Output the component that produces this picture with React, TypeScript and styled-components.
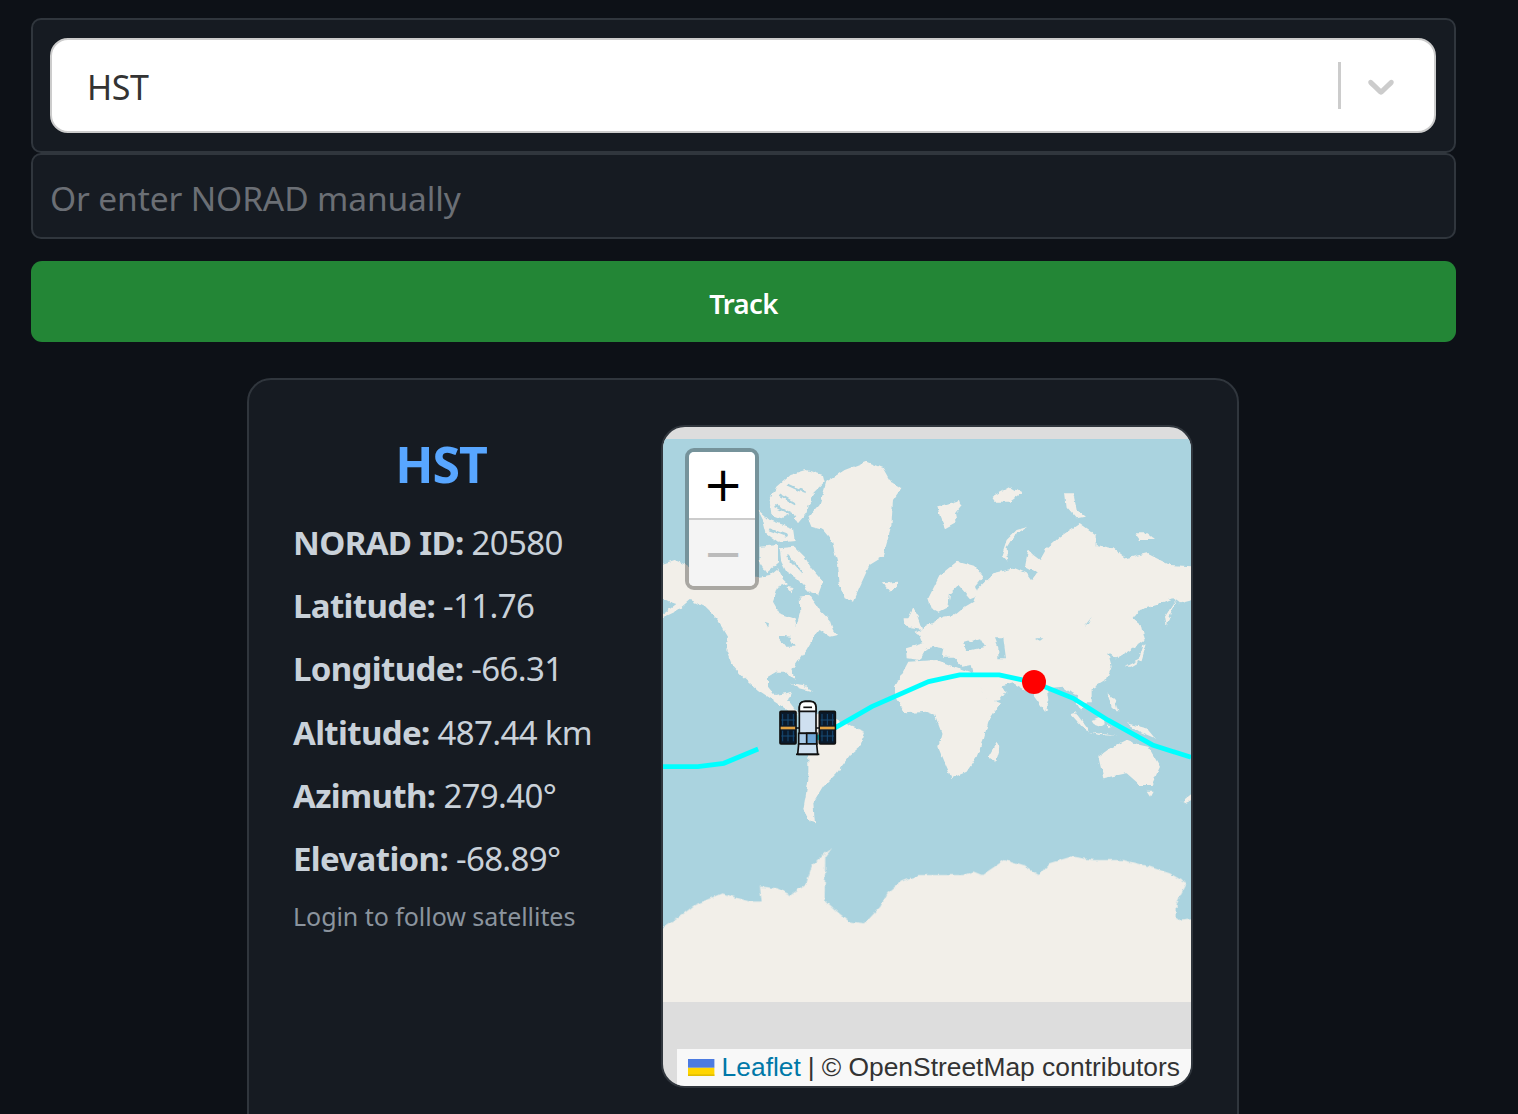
import React from "react";
import styled, { createGlobalStyle } from "styled-components";

const Global = createGlobalStyle`
  html, body { margin: 0; padding: 0; background: #0d1117; overflow: hidden; height: 1114px; }
  * { box-sizing: border-box; }
`;
const FONT = `"Noto Sans", "Open Sans", sans-serif`;

const Page = styled.div`
  width: 1425px;
  margin-left: 31px;
  padding-top: 18px;
  font-family: ${FONT};
  display: flex;
  flex-direction: column;
`;
const SelectPanel = styled.div`
  height: 135px;
  padding: 18px 18px 18px 17px;
  background: #161b22;
  border: 2px solid #30363d;
  border-radius: 10px;
`;
const SelectBox = styled.div`
  height: 95px;
  background: #fff;
  border: 2px solid #ccc;
  border-radius: 18px;
  display: flex;
  align-items: center;
  padding: 0 31px 0 35px;
`;
const SelectValue = styled.div`
  flex: 1;
  padding-top: 2px;
  font-size: 34px;
  letter-spacing: -0.4px;
  color: #333;
`;
const Separator = styled.span`
  width: 3px;
  height: 47px;
  background: #ccc;
`;
const Chevron = styled.svg`
  width: 44px;
  height: 44px;
  margin-left: 18px;
  fill: #ccc;
`;
const ManualInput = styled.input`
  height: 86px;
  width: 100%;
  padding: 3px 17px 0 17px;
  background: #161b22;
  border: 2px solid #30363d;
  border-radius: 10px;
  font-family: ${FONT};
  font-size: 33.5px;
  letter-spacing: -0.12px;
  outline: none;
  &::placeholder { color: #6b6f75; opacity: 1; }
`;
const TrackButton = styled.button`
  height: 81px;
  margin-top: 22px;
  padding-top: 4px;
  border: none;
  border-radius: 11px;
  background: #238636;
  color: #fff;
  font-family: ${FONT};
  font-size: 27.5px;
  font-weight: 600;
  letter-spacing: -0.6px;
`;
const Card = styled.section`
  width: 992px;
  height: 780px;
  margin: 36px 0 0 216px;
  padding: 45px 44px;
  background: #161b22;
  border: 2px solid #30363d;
  border-radius: 24px;
  display: flex;
  gap: 72px;
`;
const Info = styled.div`
  width: 296px;
  flex: none;
  display: flex;
  flex-direction: column;
`;
const Title = styled.h2`
  margin: 16px 0 24px;
  height: 46px;
  line-height: 46px;
  text-align: center;
  font-size: 50px;
  font-weight: 700;
  letter-spacing: -1px;
  color: #58a6ff;
`;
const Row = styled.div`
  height: 63.2px;
  line-height: 63.2px;
  font-size: 33px;
  letter-spacing: -0.65px;
  color: #c9d1d9;
  white-space: nowrap;
  b { font-weight: 700; }
`;
const LoginHint = styled.div`
  margin-top: 8px;
  line-height: 36px;
  font-size: 25px;
  letter-spacing: -0.05px;
  color: #8b949e;
  white-space: nowrap;
`;
const MapFrame = styled.div`
  position: relative;
  width: 532px;
  height: 663px;
  flex: none;
  overflow: hidden;
  background: #ddd;
  border: 2px solid #30363d;
  border-radius: 24px;
`;
const MapArt = styled.svg`
  display: block;
  width: 528px;
  height: 659px;
`;
const ZoomControl = styled.div`
  position: absolute;
  left: 22px;
  top: 21px;
  width: 74px;
  border: 4.4px solid rgba(0, 0, 0, 0.3);
  border-radius: 9px;
  background-clip: padding-box;
  overflow: hidden;
`;
const ZoomButton = styled.div<{ $off?: boolean }>`
  height: ${(p) => (p.$off ? "66px" : "68px")};
  padding-left: 2px;
  padding-bottom: ${(p) => (p.$off ? "0" : "2px")};
  display: flex;
  align-items: center;
  justify-content: center;
  font-family: "DejaVu Sans", sans-serif;
  font-size: 48px;
  line-height: 1;
  color: ${(p) => (p.$off ? "#bbb" : "#000")};
  background: ${(p) => (p.$off ? "#f4f4f4" : "#fff")};
  border-bottom: ${(p) => (p.$off ? "none" : "2px solid #ccc")};
`;
const Marker = styled.span`
  position: absolute;
  left: 359px;
  top: 243px;
  width: 24px;
  height: 24px;
  border-radius: 50%;
  background: #f00;
`;
const Satellite = styled.svg`
  position: absolute;
  left: 97px;
  top: 263px;
  width: 100px;
  height: 75px;
`;
const Attribution = styled.div`
  position: absolute;
  right: 0;
  bottom: 0;
  height: 37px;
  padding: 0 11px;
  display: flex;
  align-items: center;
  gap: 7px;
  background: rgba(255, 255, 255, 0.8);
  font-family: "Liberation Sans", Arial, sans-serif;
  font-size: 26.4px;
  color: #333;
  white-space: nowrap;
`;
const LeafletLink = styled.span`
  color: #0078a8;
`;
const Flag = styled.svg`
  width: 26.4px;
  height: 17.6px;
`;

/* Each shape list is traced against one crop of the map, so its group carries that crop's offset. */
const SEA = "#aad3df";
const LAND = "#f2efe9";

const northAmerica = [
  "-30,350 35,330 70,345 150,380 290,380 320,375 345,355 360,385 375,400 345,410 330,455 350,490 395,505 400,528 412,485 410,440 440,435 470,480 500,510 510,540 522,555 500,560 470,540 450,565 430,600 415,620 395,650 385,660 398,690 385,682 370,665 340,665 315,680 315,710 335,735 370,730 385,725 375,750 405,790 375,780 330,750 285,720 240,680 205,640 190,600 195,560 165,510 125,470 80,450 45,480 -30,515 40,462 20,455 -30,430",
  "340,110 380,75 430,60 480,75 485,95 450,130 430,190 405,220 385,190 355,205 325,195 320,150",
  "285,180 320,210 390,235 395,270 345,275 310,250 300,210",
  "290,290 345,285 345,340 310,370 290,340",
  "350,295 395,290 425,320 445,355 480,395 465,435 440,425 400,385 370,365 355,335",
  "370,410 395,415 385,430",
  "435,205 470,165 490,95 545,60 610,35 660,55 680,90 715,115 690,150 685,230 660,320 620,345 590,410 570,455 545,445 530,400 525,345 505,270 480,240 445,230",
  "660,400 705,395 705,410 680,425",
  "750,475 762,495 778,540 745,535 755,515",
  "725,505 745,505 742,525 727,528",
];
const northAmericaWater = [
  "345,555 380,560 395,590 365,590 350,570",
  "305,515 318,520 315,535",
  "350,130 400,160 395,166 345,136",
  "338,165 400,195 395,201 333,171",
  "375,100 430,125 425,131 370,106",
  "320,235 375,255 372,261 317,241",
  "375,315 420,365 415,370 370,320",
];
const eurasia = [
  "18,535 70,520 60,495 45,490 95,460 130,440 165,435 195,410 220,395 235,355 280,310 345,295 380,310 395,330 410,310 375,290 385,240 400,255 420,270 440,235 480,200 540,160 590,195 590,225 640,235 680,265 740,250 810,285 900,290 900,385 840,400 820,385 770,405 720,420 700,445 725,465 735,510 700,535 650,565 625,550 635,590 620,630 570,660 575,700 550,680 515,670 490,650 440,655 445,690 435,725 410,690 395,670 340,640 300,650 320,665 300,690 265,695 245,660 225,625 215,585 190,590 160,560 130,560 105,530 80,535 60,570 20,565",
  "85,385 120,315 170,275 225,290 250,320 225,350 235,375 210,385 175,345 150,370 145,410 115,425 95,415",
  "112,110 180,90 185,105 165,130 170,155 135,175 120,140",
  "275,80 330,50 365,70 330,95 285,95",
  "385,170 345,195 320,235 325,275 305,255 320,210 350,180",
  "495,70 520,70 530,120 555,140 530,145 500,110",
  "705,190 740,190 765,210 720,210",
  "795,440 830,385 815,420 800,470",
  "675,590 715,570 730,525 740,520 725,570 690,590",
  "15,465 40,415 60,470 25,470",
];
const eurasiaWater = [
  "190,520 240,505 255,530 215,540 195,540",
  "285,505 310,505 318,565 295,565 295,530",
  "405,505 430,505 420,512",
  "555,467 575,440 565,460",
  "105,530 130,535 125,560 110,555",
];
const africaAmericas = [
  "345,140 385,65 470,60 580,100 620,175 660,190 625,245 610,300 590,350 560,395 515,415 500,380 475,320 485,280 465,225 440,215 375,220 345,170",
  "625,350 650,305 658,320 645,365",
  "115,220 150,225 190,250 255,275 240,320 210,345 170,400 130,440 100,490 105,550 90,545 70,510 85,420 85,340 60,300 70,240",
  "30,130 70,135 100,155 60,145",
  "0,170 20,195 50,215 60,235 30,215 0,195",
];
const oceania = [
  "235,290 270,265 320,240 360,255 385,260 420,320 395,375 360,375 320,340 250,355",
  "380,395 398,395 390,410",
  "485,425 540,380 540,410 495,430",
  "150,160 165,155 210,215 195,210",
  "205,215 290,228 240,225",
  "215,180 240,170 255,190 240,200 225,195",
  "262,190 275,200 265,205",
  "320,190 380,205 405,235 360,215",
  "262,95 285,120 295,155 275,140",
  "175,100 215,90 215,130 195,130 185,155 170,130",
  "75,140 85,150 78,155",
];
const antarctica =
  "-30,1550 9,1520 70,1480 100,1455 180,1420 260,1445 295,1445 290,1400 340,1405 380,1425 425,1390 440,1340 480,1300 500,1285 480,1310 478,1440 520,1480 550,1505 595,1510 640,1460 660,1420 700,1385 750,1365 820,1365 880,1365 910,1355 935,1365 1000,1320 1060,1340 1100,1365 1130,1330 1195,1310 1260,1320 1345,1320 1420,1340 1480,1360 1530,1390 1500,1450 1500,1500 1590,1490 1590,1800 -30,1800";

function Shapes({ land, water = [] }: { land: string[]; water?: string[] }) {
  return (
    <>
      {land.map((p, i) => (
        <polygon key={i} points={p} fill={LAND} />
      ))}
      {water.map((p, i) => (
        <polygon key={i} points={p} fill={SEA} />
      ))}
    </>
  );
}

export default function App() {
  return (
    <Page>
      <Global />
      <SelectPanel>
        <SelectBox>
          <SelectValue>HST</SelectValue>
          <Separator />
          <Chevron viewBox="0 0 20 20">
            <path d="M4.516 7.548c0.436-0.446 1.043-0.481 1.576 0l3.908 3.747 3.908-3.747c0.533-0.481 1.141-0.446 1.574 0 0.436 0.445 0.408 1.197 0 1.615-0.406 0.418-4.695 4.502-4.695 4.502-0.217 0.223-0.502 0.335-0.787 0.335s-0.57-0.112-0.789-0.335c0 0-4.287-4.084-4.695-4.502s-0.436-1.17 0-1.615z" />
          </Chevron>
        </SelectBox>
      </SelectPanel>
      <ManualInput placeholder="Or enter NORAD manually" readOnly />
      <TrackButton>Track</TrackButton>
      <Card>
        <Info>
          <Title>HST</Title>
          <Row><b>NORAD ID:</b> 20580</Row>
          <Row><b>Latitude:</b> -11.76</Row>
          <Row><b>Longitude:</b> -66.31</Row>
          <Row><b>Altitude:</b> 487.44 km</Row>
          <Row><b>Azimuth:</b> 279.40°</Row>
          <Row><b>Elevation:</b> -68.89°</Row>
          <LoginHint>Login to follow satellites</LoginHint>
        </Info>
        <MapFrame>
          <MapArt viewBox="663 427 528 659">
            <defs>
              <filter id="coast" filterUnits="userSpaceOnUse" x="640" y="420" width="580" height="640">
                <feTurbulence type="fractalNoise" baseFrequency="0.16" numOctaves="2" seed="4" />
                <feDisplacementMap in="SourceGraphic" scale="4.5" xChannelSelector="R" yChannelSelector="G" />
                <feGaussianBlur stdDeviation="0.55" />
              </filter>
              <clipPath id="tiles"><rect x="663" y="439" width="528" height="563" /></clipPath>
            </defs>
            <rect x="663" y="439" width="528" height="563" fill={SEA} />
            <g clipPath="url(#tiles)">
              <g filter="url(#coast)">
                <g transform="translate(663 450) scale(0.3333)">
                  <Shapes land={northAmerica} water={northAmericaWater} />
                </g>
                <g transform="translate(900 470) scale(0.3333)">
                  <Shapes land={eurasia} water={eurasiaWater} />
                </g>
                <g transform="translate(780 640) scale(0.3333)">
                  <Shapes land={africaAmericas} />
                </g>
                <g transform="translate(1020 660) scale(0.3333)">
                  <Shapes land={oceania} />
                </g>
                <g transform="translate(660 420) scale(0.3444 0.3333)">
                  <Shapes land={[antarctica]} />
                </g>
              </g>
            </g>
            <g transform="translate(660 420) scale(0.3444 0.3333)">
              <polyline points="9,1040 110,1040 185,1030 285,987" fill="none" stroke="#0ff" strokeWidth="4.8" vectorEffect="non-scaling-stroke" />
              <polyline points="455,955 615,860 780,785 870,765 985,765 1085,787 1200,835 1300,900 1430,975 1542,1012" fill="none" stroke="#0ff" strokeWidth="4.8" vectorEffect="non-scaling-stroke" />
            </g>
          </MapArt>
          <ZoomControl>
            <ZoomButton>+</ZoomButton>
            <ZoomButton $off>−</ZoomButton>
          </ZoomControl>
          <Marker />
          <Satellite viewBox="0 0 300 225">
            <g stroke="#111" strokeWidth="5">
              <rect x="60" y="64" width="48" height="98" fill="#0a1a2c" rx="3" />
              <rect x="178" y="64" width="48" height="98" fill="#0a1a2c" rx="3" />
            </g>
            <g stroke="#174a75" strokeWidth="3" fill="none">
              <path d="M68 72v34M84 72v34M100 72v34M68 122v32M84 122v32M100 122v32M186 72v34M202 72v34M218 72v34M186 122v32M202 122v32M218 122v32M64 90h40M64 138h40M182 90h40M182 138h40" />
            </g>
            <rect x="62" y="110" width="44" height="8" fill="#e0a040" />
            <rect x="180" y="110" width="44" height="8" fill="#e0a040" />
            <path d="M106 114h12M168 114h12" stroke="#111" strokeWidth="5" />
            <path d="M118 130V52q0-18 18-18h14q18 0 18 18v78z" fill="#cfe0f0" stroke="#111" strokeWidth="5" />
            <path d="M118 64V52q0-18 18-18h14q18 0 18 18v12z" fill="#fff" stroke="#111" strokeWidth="5" />
            <path d="M130 52h26" stroke="#111" strokeWidth="5" />
            <rect x="116" y="130" width="54" height="32" fill="#a9cbe8" stroke="#111" strokeWidth="5" />
            <rect x="140" y="130" width="30" height="32" fill="#6ea6d6" stroke="#111" strokeWidth="5" />
            <path d="M116 162h54l3 31h-60z" fill="#cfe0f0" stroke="#111" strokeWidth="5" strokeLinejoin="round" />
            <path d="M108 193h70" stroke="#111" strokeWidth="5" />
          </Satellite>
          <Attribution>
            <Flag viewBox="0 0 12 8">
              <rect width="12" height="4" fill="#4c7be1" />
              <rect y="4" width="12" height="4" fill="#ffd500" />
              <rect y="7" width="12" height="1" fill="#e0bc00" />
            </Flag>
            <LeafletLink>Leaflet</LeafletLink>
            <span>|</span>
            <span>© OpenStreetMap contributors</span>
          </Attribution>
        </MapFrame>
      </Card>
    </Page>
  );
}
